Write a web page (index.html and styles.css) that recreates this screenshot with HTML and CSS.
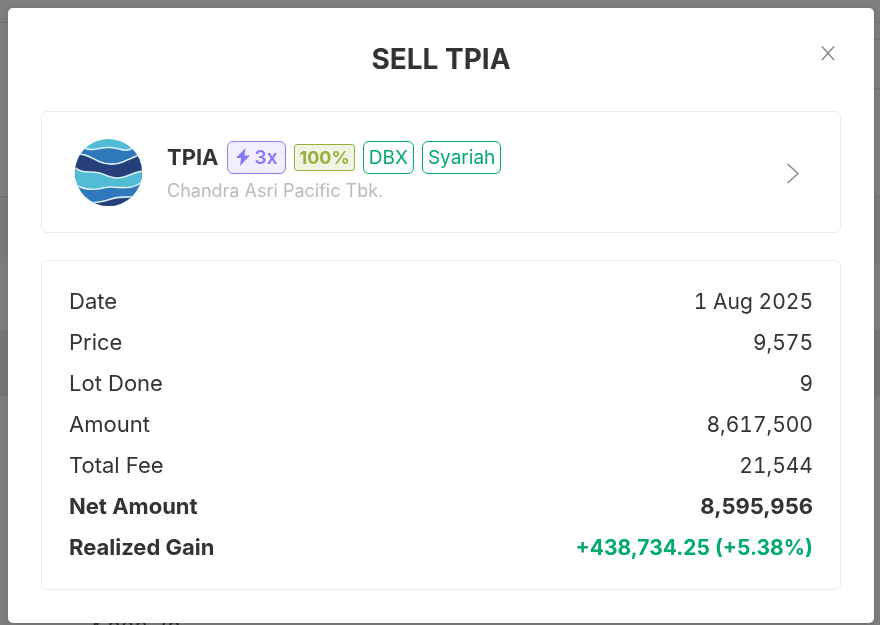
FILE: index.html
```html
<!DOCTYPE html>
<html lang="en">
<head>
<meta charset="utf-8">
<meta name="viewport" content="width=device-width, initial-scale=1">
<title>Sell TPIA</title>
<link rel="stylesheet" href="styles.css">
</head>
<body>
<div class="backdrop" aria-hidden="true">
  <div class="band band-top"></div>
  <div class="band band-head"><div class="panel panel-short"></div><div class="panel"></div></div>
  <div class="band band-row"></div>
  <div class="band band-light"></div>
  <div class="band band-dark"></div>
  <div class="band band-rest"></div>
  <div class="band-value">4,002.70</div>
</div>
<main class="dialog" role="dialog" aria-labelledby="title">
  <header class="dialog-header">
    <h1 id="title">SELL TPIA</h1>
    <button class="close" type="button" aria-label="Close">
      <svg width="14" height="15" viewBox="0 0 14 15"><path d="M1 .5 13 14M13 .5 1 14"/></svg>
    </button>
  </header>
  <a class="card stock" href="#">
    <svg class="logo" width="68" height="68" viewBox="0 0 68 68">
      <defs><clipPath id="disc"><circle cx="33.500" cy="34.500" r="33.500"/></clipPath></defs>
      <g clip-path="url(#disc)" stroke="#d9eef4" stroke-width="1.600">
        <rect width="68" height="68" fill="#50bdd5" stroke="none"/>
        <path fill="#2e78bb" d="M-2 6C6 8 10 12 18 11.500C26 11 28 9 35 9.500C45 10 50 15 58 10L70 2V30H-2Z"/>
        <path fill="#263f7a" d="M-2 17C10 14 16 20 24 23.500C32 27 42 27 49 23.500C55 20 60 20 68 14V42H-2Z"/>
        <path fill="#50bdd5" d="M-2 28C4 34 10 34 17 34C28 34 33 40 42 40C52 40 55 35 68 33V60H-2Z"/>
        <path fill="#2e78bb" d="M-2 46C6 50 12 52 22 51C30 50 33 48 42 49.500C53 50 58 50 68 44V72H-2Z"/>
        <path fill="#263f7a" d="M10 65C22 65 28 64 36 61C44 58 50 60 64 58V72H10Z"/>
      </g>
    </svg>
    <div class="stock-info">
      <div class="stock-line">
        <strong class="ticker">TPIA</strong>
        <span class="tag tag-leverage">
          <svg width="14" height="18" viewBox="0 0 14 18"><path fill="currentColor" d="M9.500 0 0 10h5L4 18 14 7.500H8.500Z"/></svg>3x</span>
        <span class="tag tag-percent">100%</span>
        <span class="tag">DBX</span>
        <span class="tag">Syariah</span>
      </div>
      <div class="company">Chandra Asri Pacific Tbk.</div>
    </div>
    <svg class="chevron" width="12" height="22" viewBox="0 0 12 22"><path d="M.5 3 11 12.500 .5 22"/></svg>
  </a>
  <dl class="card details">
    <div class="row"><dt>Date</dt><dd>1 Aug 2025</dd></div>
    <div class="row"><dt>Price</dt><dd>9,575</dd></div>
    <div class="row"><dt>Lot Done</dt><dd>9</dd></div>
    <div class="row"><dt>Amount</dt><dd>8,617,500</dd></div>
    <div class="row"><dt>Total Fee</dt><dd>21,544</dd></div>
    <div class="row strong"><dt>Net Amount</dt><dd>8,595,956</dd></div>
    <div class="row strong"><dt>Realized Gain</dt><dd class="gain">+438,734.25 (+5.38%)</dd></div>
  </dl>
</main>
</body>
</html>
```
FILE: styles.css
```css
* { box-sizing: border-box; }

body {
  margin: 0;
  min-height: 100vh;
  padding: 8px 6px 2px 8px;
  overflow: hidden;
  background: #7f7f7f;
  color: #333335;
  font-family: Inter, "Liberation Sans", sans-serif;
  font-size: 22px;
}

.backdrop {
  position: fixed;
  inset: 0;
  z-index: -1;
  overflow: hidden;
}
.band { border-bottom: 1px solid #717171; }
.band-top { height: 23px; }
.band-head { height: 66px; border: 0; }
.panel {
  width: 50%;
  height: 49px;
  margin-left: auto;
  border-bottom: 1px solid #717171;
}
.panel-short { height: 17px; }
.band-row { height: 108px; }
.band-light { height: 133px; border: 0; background: linear-gradient(#7b7b7b 50%, #7f7f7f 50%); }
.band-dark { height: 66px; border: 0; background: #777; }
.band-rest { height: 222px; border: 0; }
.band-value {
  padding-left: 88px;
  color: #222;
  font-size: 21px;
  font-variant-numeric: tabular-nums;
  line-height: 24px;
}

.dialog {
  min-height: calc(100vh - 10px);
  padding: 32px 33px 33px;
  border-radius: 5px;
  background: #fff;
  box-shadow: 0 2px 10px #0002;
}

.dialog-header {
  display: grid;
  grid-template-columns: 1fr auto 1fr;
  margin-bottom: 33px;
}
h1 {
  grid-column: 2;
  margin: 0;
  font-size: 28px;
  font-weight: 700;
  line-height: 38px;
}
.close {
  justify-self: end;
  align-self: start;
  display: flex;
  margin: 0;
  padding: 6px;
  border: 0;
  background: none;
  cursor: pointer;
}
.close svg, .chevron { fill: none; stroke: #888; stroke-width: 1.500; }

.card {
  border: 1px solid #ececec;
  border-radius: 6px;
}

.stock {
  display: flex;
  align-items: center;
  gap: 24px;
  min-height: 122px;
  margin-bottom: 27px;
  padding: 24px 41px 24px 33px;
  color: inherit;
  text-decoration: none;
}
.logo, .chevron { flex: none; }
.chevron { overflow: visible; }
.stock-info { flex: 1; padding-top: 4px; }
.stock-line {
  display: flex;
  align-items: center;
  gap: 8px;
}
.ticker { font-weight: 700; }
.tag {
  display: flex;
  align-items: center;
  gap: 5px;
  height: 33px;
  padding: 0 5px;
  border: 1px solid #00ab6b;
  border-radius: 6px;
  color: #00ab6b;
  font-size: 19px;
}
.tag-leverage {
  padding: 0 8px;
  border-color: #8b7cf8;
  background: #f2eeff;
  color: #8477f7;
  font-weight: 600;
}
.tag-percent {
  height: 27px;
  padding: 0 4px;
  border-color: #97b13d;
  border-radius: 3px;
  background: #eff4e5;
  color: #97b13d;
  font-size: 18px;
  font-weight: 700;
}
.company {
  color: #b9b9b9;
  font-size: 18px;
  line-height: 34px;
}

.details {
  margin: 0;
  padding: 20px 27px 21px;
}
.row {
  display: flex;
  justify-content: space-between;
  line-height: 41px;
}
dd {
  margin: 0;
  font-size: 21px;
  font-variant-numeric: tabular-nums;
}
.strong { font-weight: 700; }
.strong dd {
  font-size: 22px;
  font-variant-numeric: normal;
}
.strong .gain {
  color: #00ab6b;
  font-size: 21px;
}
```
